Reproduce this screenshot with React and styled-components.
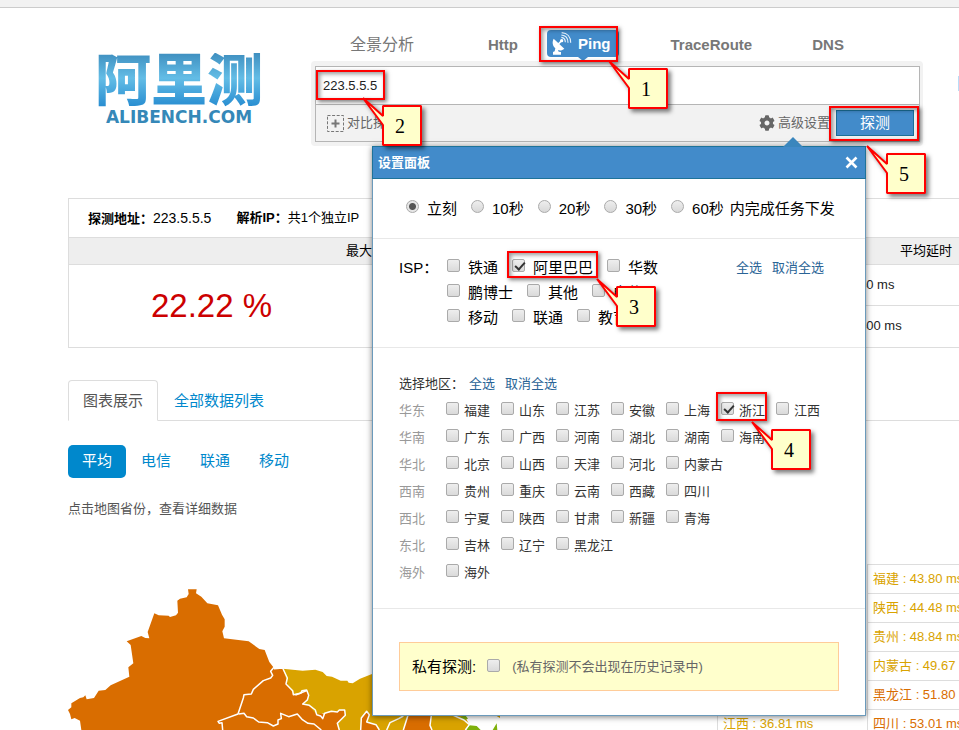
import React from 'react'
import styled, { createGlobalStyle } from 'styled-components'
import { FaCog } from 'react-icons/fa'

const delays = [
    {name: '福建', value: '43.80', color: '#d9a300'},
    {name: '陕西', value: '44.48', color: '#d9a300'},
    {name: '贵州', value: '48.84', color: '#d9a300'},
    {name: '内蒙古', value: '49.67', color: '#d9a300'},
    {name: '黑龙江', value: '51.80', color: '#d96d00'},
    {name: '四川', value: '53.01', color: '#d96d00'},
]

const waits = ['立刻', '10秒', '20秒', '30秒']

const ispRows = [
    ['铁通', '阿里巴巴', '华数'],
    ['鹏博士', '其他', '电信'],
    ['移动', '联通', '教育网'],
]

const regions = [
    {area: '华东', items: ['福建', '山东', '江苏', '安徽', '上海', '浙江', '江西']},
    {area: '华南', items: ['广东', '广西', '河南', '湖北', '湖南', '海南']},
    {area: '华北', items: ['北京', '山西', '天津', '河北', '内蒙古']},
    {area: '西南', items: ['贵州', '重庆', '云南', '西藏', '四川']},
    {area: '西北', items: ['宁夏', '陕西', '甘肃', '新疆', '青海']},
    {area: '东北', items: ['吉林', '辽宁', '黑龙江']},
    {area: '海外', items: ['海外']},
]

const steps = [
    {no: 1, mark: [539, 26, 79, 36], note: [628, 68]},
    {no: 2, mark: [316, 70, 69, 30], note: [382, 105]},
    {no: 3, mark: [507, 251, 91, 27], note: [616, 286]},
    {no: 4, mark: [716, 392, 51, 29], note: [771, 429]},
    {no: 5, mark: [829, 106, 90, 35], note: [886, 153]},
]

function DishIcon() {
    return (
        <svg width="20" height="24" viewBox="0 0 60 72" fill="none" aria-hidden="true">
            <path d="M5 20 L37 50 C30 56 24 56 18 54 L20 59 L27 60 L27 68 L3 68 L3 60 L8 58 L10 49 C1 41 0 30 5 20Z" fill="#fff" />
            <path d="M19 36 L28 27" stroke="#fff" strokeWidth="5" />
            <circle cx="29" cy="26" r="5" fill="#fff" />
            <path d="M28 16 C36 17 40 22 40 31 M28 9 C40 10 48 18 48 32 M29 2 C46 3 56 15 56 32" stroke="#e4f0fa" strokeWidth="3.5" />
        </svg>
    )
}

function CompareIcon() {
    return (
        <svg width="17" height="17" viewBox="0 0 17 17" fill="none" stroke="#777" aria-hidden="true">
            <rect x=".5" y=".5" width="16" height="16" strokeDasharray="3 1.6" />
            <path d="M4.5 8.5h8M8.5 4.5v8" strokeWidth="2" />
        </svg>
    )
}

function CloseIcon() {
    return (
        <svg width="13" height="13" viewBox="0 0 13 13" stroke="#fff" strokeWidth="2.6" aria-hidden="true">
            <path d="M1.5 1.5l10 10M11.5 1.5l-10 10" />
        </svg>
    )
}

function ChinaMap() {
    return (
        <MapSvg width="432" height="142" viewBox="24 54 1296 426" role="img" aria-label="地图">
            <path fill="#d96d00" d="M64 480 L60 452 44 444 34 448 30 432 24 420 34 412 34 400 60 384 70 382 76 376 80 388 102 384 116 362 136 360 152 346 208 320 205 292 220 280 212 225 200 214 244 198 256 204 268 205 263 186 283 130 296 136 326 137 330 141 348 136 354 128 352 92 360 86 380 82 386 72 384 58 410 58 408 70 424 80 442 100 474 106 486 134 494 148 494 170 487 184 492 205 566 214 598 237 614 240 628 276 642 294 668 294 700 372 860 480Z" />
            <path fill="#d9a300" d="M668 296 L728 302 766 299 788 306 800 318 816 320 842 332 862 332 866 338 878 340 900 326 936 312 1080 400 1210 430 1228 464 1216 480 836 480 832 462 800 430 770 432 728 402 745 380 740 360 700 374 684 344Z" />
            <path fill="#d96d00" d="M728 402 L748 408 770 436 790 444 796 430 852 420 856 434 832 462 836 480 700 480 700 380 745 362 744 384Z" />
            <path fill="#d96d00" d="M902 480 L904 444 920 424 928 434 920 456 948 464 958 480Z" />
            <path fill="#d96d00" d="M1030 480 L1040 450 1046 436 1114 436 1110 466 1116 480Z" />
            <path fill="#7eb00b" d="M1200 442 L1216 436 1224 446 1212 450Z M1218 480 L1228 466 1250 468 1262 480Z M1298 480 L1310 460 1312 480Z" />
            <path fill="#d9a300" d="M1310 438 h20 l-10 6z" />
            <g fill="none" stroke="#fff" strokeWidth="4.5" strokeLinejoin="round">
                <path d="M642 292 L632 304 638 316 632 324 610 332 580 358 574 372 552 374 550 384 534 432 474 454 478 460 486 458 488 480" />
                <path d="M642 296 L668 294 682 324 678 342 698 362 700 374 722 370 726 362 740 360 746 376 742 390 728 402 748 406 766 420 770 434 782 438 788 446 794 430 814 424 832 426 838 420 854 420 856 436 832 460 838 480" />
                <path d="M536 432 L552 430 560 440 580 444 596 456 622 458 640 468 654 462 654 450 664 446 662 430 686 440 712 432 726 448 744 460 762 462 784 480" />
                <path d="M902 480 L904 444 920 424 928 434 920 456 948 464 958 480 M980 480 L990 458 1016 446 1030 438 M1044 436 L1030 480 M1114 436 L1110 466 1116 480 M1180 436 L1212 450 1228 464 1216 480" />
            </g>
        </MapSvg>
    )
}

function Check({label, size, gap, lift}) {
    return (
        <Choice $size={size} $gap={gap}>
            <CheckBox type="checkbox" $lift={lift} defaultChecked={label === '阿里巴巴' || label === '浙江'} />
            {label}
        </Choice>
    )
}

function SettingsPanel() {
    return (
        <Panel>
            <PanelHead>
                <PanelTitle>设置面板</PanelTitle>
                <CloseButton type="button" aria-label="关闭"><CloseIcon /></CloseButton>
            </PanelHead>
            <WaitSection>
                {waits.map((wait, i) => (
                    <Choice key={wait} $size={15} $gap={8}>
                        <Radio type="radio" name="wait" defaultChecked={i === 0} />
                        {wait}
                    </Choice>
                ))}
                <WaitEnd>
                    <Choice $size={15} $gap={8}>
                        <Radio type="radio" name="wait" />
                        60秒
                    </Choice>
                    <span>内完成任务下发</span>
                </WaitEnd>
            </WaitSection>
            <IspSection>
                <IspTitle>ISP：</IspTitle>
                <IspList>
                    {ispRows.map((row) => (
                        <IspRow key={row[0]}>
                            {row.map((isp) => <Check key={isp} label={isp} size={15} gap={8} lift={4} />)}
                        </IspRow>
                    ))}
                </IspList>
                <Links>
                    <PickLink href="#all">全选</PickLink>
                    <PickLink href="#none">取消全选</PickLink>
                </Links>
            </IspSection>
            <RegionSection>
                <RegionHead>
                    <span>选择地区：</span>
                    <Links>
                        <PickLink href="#all">全选</PickLink>
                        <PickLink href="#none">取消全选</PickLink>
                    </Links>
                </RegionHead>
                {regions.map(({area, items}) => (
                    <RegionRow key={area}>
                        <Area>{area}</Area>
                        {items.map((item) => <Check key={item} label={item} size={13} gap={5} lift={5} />)}
                    </RegionRow>
                ))}
            </RegionSection>
            <PrivateBox>
                <PrivateLabel htmlFor="private">私有探测:</PrivateLabel>
                <CheckBox id="private" type="checkbox" $lift={2} />
                <PrivateHint>(私有探测不会出现在历史记录中)</PrivateHint>
            </PrivateBox>
        </Panel>
    )
}

// numbered step: red frame round a control, and the note that points at it
function Step({no, mark, note}) {
    return (
        <>
            <Mark $x={mark[0]} $y={mark[1]} $w={mark[2]} $h={mark[3]} />
            <Note $x={note[0]} $y={note[1]}>
                <NoteShape width="68" height="58" viewBox="-22 -11 68 58" aria-hidden="true">
                    <path d="M-19 -7 L1 11 L1 1 L39 1 L39 40 L1 40 L1 20 Z" fill="#ffffcb" stroke="#f00" strokeWidth="2" strokeLinejoin="bevel" />
                </NoteShape>
                <NoteText>{no}</NoteText>
            </Note>
        </>
    )
}

function App() {
    return (
        <Page>
            <GlobalStyle />
            <TopStrip />
            <Header>
                <Logo>
                    <LogoName>阿里测</LogoName>
                    <LogoSite>ALIBENCH.COM</LogoSite>
                </Logo>
                <Search>
                    <Tabs>
                        <WideTab href="#all">全景分析</WideTab>
                        <Tab href="#http">Http</Tab>
                        <ActiveTab href="#ping"><DishIcon />Ping</ActiveTab>
                        <Tab href="#trace">TraceRoute</Tab>
                        <Tab href="#dns">DNS</Tab>
                    </Tabs>
                    <SearchFrame>
                        <SearchBox>
                            <SearchInput aria-label="探测地址" defaultValue="223.5.5.5" />
                            <Toolbar>
                                <ToolButton type="button"><CompareIcon />对比探测</ToolButton>
                                <ToolGroup>
                                    <ToolButton type="button"><FaCog size={16} />高级设置</ToolButton>
                                    <RunButton type="button">探测</RunButton>
                                </ToolGroup>
                            </Toolbar>
                        </SearchBox>
                    </SearchFrame>
                    <SettingsPanel />
                </Search>
                <SideBox />
            </Header>
            <Main>
                <Summary>
                    <Info>
                        <span><b>探测地址：</b><Address>223.5.5.5</Address></span>
                        <span><b>解析IP：</b>共1个独立IP</span>
                    </Info>
                    <Table>
                        <colgroup>
                            <LossCol />
                            <col />
                            <DelayCol />
                        </colgroup>
                        <thead>
                            <tr>
                                <Th />
                                <Th>最大延时</Th>
                                <Th $indent={41}>平均延时</Th>
                            </tr>
                        </thead>
                        <tbody>
                            <tr>
                                <Loss rowSpan={2}>22.22 %</Loss>
                                <Td />
                                <Td>40 ms</Td>
                            </tr>
                            <tr>
                                <Td />
                                <Td>400 ms</Td>
                            </tr>
                        </tbody>
                    </Table>
                </Summary>
                <ViewTabs>
                    <ViewTab href="#chart" $active>图表展示</ViewTab>
                    <ViewTab href="#list">全部数据列表</ViewTab>
                </ViewTabs>
                <Pills>
                    <Pill type="button" $active>平均</Pill>
                    <Pill type="button">电信</Pill>
                    <Pill type="button">联通</Pill>
                    <Pill type="button">移动</Pill>
                </Pills>
                <Hint>点击地图省份，查看详细数据</Hint>
                <Board>
                    <MapArea><ChinaMap /></MapArea>
                    <Ranks>
                        <RankList $last>
                            <Rank $color="#d9a300">江西 : 36.81 ms</Rank>
                        </RankList>
                        <RankList>
                            {delays.map(({name, value, color}) => (
                                <Rank key={name} $color={color}>{name} : {value} ms</Rank>
                            ))}
                        </RankList>
                    </Ranks>
                </Board>
            </Main>
            {steps.map((step) => <Step key={step.no} {...step} />)}
        </Page>
    )
}

const GlobalStyle = createGlobalStyle`
    * {
        box-sizing: border-box;
    }
    body {
        margin: 0;
        background: #fff;
        color: #000;
        font: 13px/20px "Liberation Sans", "Noto Sans CJK SC", sans-serif;
    }
    button, input {
        margin: 0;
        font: inherit;
    }
    a {
        text-decoration: none;
    }
`

const Page = styled.div`
    position: relative;
    height: 100vh;
    overflow: hidden;
`

const TopStrip = styled.div`
    height: 8px;
    background: #f2f2f2;
    border-bottom: 1px solid #ccc;
`

const Header = styled.header`
    display: flex;
    padding: 22px 0 0 95px;
`

const Logo = styled.div`
    flex: 0 0 216px;
    padding-top: 23px;
`

const LogoName = styled.div`
    width: 168px;
    font-size: 56px;
    line-height: 56px;
    font-weight: 900;
    color: transparent;
    background: linear-gradient(#3f8fc0, #63bde6 45%, #2389cf);
    background-clip: text;
    -webkit-background-clip: text;
`

const LogoSite = styled.div`
    width: 168px;
    text-align: center;
    font: bold 17px/16px "DejaVu Sans", sans-serif;
    color: #3588b8;
`

const Search = styled.div`
    position: relative;
    flex: 0 0 612px;
`

const Tabs = styled.nav`
    display: flex;
    gap: 21px;
    padding-left: 8px;
    margin-bottom: 4px;
`

const Tab = styled.a`
    padding: 0 8px 0 31px;
    color: #777;
    font-size: 15px;
    font-weight: bold;
    line-height: 29px;
    height: 27px;
`

const WideTab = styled(Tab)`
    margin-right: 14px;
    font-size: 16px;
    font-weight: normal;
`

const ActiveTab = styled(Tab)`
    position: relative;
    display: flex;
    align-items: center;
    gap: 6px;
    padding-left: 5px;
    color: #fff;
    background: #428bca;
    border-radius: 4px;
    &::after {
        content: "";
        position: absolute;
        top: 100%;
        left: 50%;
        margin-left: -5px;
        border: 5px solid transparent;
        border-top: 4px solid #428bca;
        border-bottom: 0;
    }
`

const SearchFrame = styled.div`
    padding: 5px 3px 4px 4px;
    background: #f2f2f2;
    border-radius: 4px;
`

const SearchBox = styled.div`
    border: 1px solid #b5b5b5;
`

const SearchInput = styled.input`
    display: block;
    width: 100%;
    height: 38px;
    padding: 0 7px;
    border: 0;
    border-bottom: 1px solid #b5b5b5;
    background: #fff;
    color: #222;
    outline: 0;
`

const Toolbar = styled.div`
    display: flex;
    align-items: center;
    justify-content: space-between;
    height: 36px;
    padding: 0 5px 0 11px;
`

const ToolGroup = styled.div`
    display: flex;
    align-items: center;
    gap: 6px;
`

const ToolButton = styled.button`
    display: flex;
    align-items: center;
    gap: 3px;
    padding: 0;
    border: 0;
    background: none;
    color: #666;
`

const RunButton = styled.button`
    width: 78px;
    height: 26px;
    padding: 0;
    border: 1px solid #1a7098;
    background: #428bca;
    color: #fff;
    font-size: 15px;
`

const SideBox = styled.div`
    flex: 1;
    height: 15px;
    margin: 46px 0 0 35px;
    background: #b9dcf8;
`

const Panel = styled.section`
    position: absolute;
    z-index: 1;
    top: 116px;
    right: 57px;
    width: 494px;
    padding-bottom: 24px;
    background: #fff;
    border: 1px solid #6b9abb;
    box-shadow: 0 1px 6px rgba(0, 0, 0, .5);
`

const PanelHead = styled.div`
    position: relative;
    display: flex;
    align-items: center;
    justify-content: space-between;
    height: 33px;
    margin: -1px -1px 0;
    padding: 0 7px 0 5px;
    color: #fff;
    background: #428bca;
    border: 1px solid #1e7399;
    &::before {
        content: "";
        position: absolute;
        right: 62px;
        bottom: 100%;
        border: 10px solid transparent;
        border-bottom-color: #3a86bd;
        border-top: 0;
    }
`

const PanelTitle = styled.h2`
    margin: 0;
    font-size: 13px;
`

const CloseButton = styled.button`
    display: flex;
    padding: 0;
    border: 0;
    background: none;
`

const WaitSection = styled.div`
    display: flex;
    align-items: center;
    gap: 14px;
    height: 60px;
    padding-left: 33px;
    border-bottom: 1px solid #e8e8e8;
`

const WaitEnd = styled.div`
    display: flex;
    gap: 6px;
    font-size: 15px;
`

const Choice = styled.label`
    display: inline-flex;
    align-items: center;
    gap: ${({$gap}) => $gap}px;
    font-size: ${({$size}) => $size}px;
    white-space: nowrap;
`

const Radio = styled.input`
    appearance: none;
    width: 13px;
    height: 13px;
    margin-bottom: 4px;
    border: 1px solid #aaa;
    border-radius: 50%;
    background: linear-gradient(#eee, #d8d8d8);
    &:checked {
        background: radial-gradient(circle, #555 0 3px, #e6e6e6 4px);
    }
`

const CheckBox = styled.input`
    appearance: none;
    position: relative;
    flex: none;
    width: 13px;
    height: 13px;
    margin-bottom: ${({$lift}) => $lift}px;
    border: 1px solid #aaa;
    border-radius: 2px;
    background: linear-gradient(#eee, #dadada);
    &:checked::after {
        content: "";
        position: absolute;
        left: 4px;
        top: 0;
        width: 4px;
        height: 8px;
        border: solid #333;
        border-width: 0 2px 2px 0;
        transform: rotate(42deg);
    }
`

const IspSection = styled.div`
    display: flex;
    padding: 16px 41px 17px 26px;
    line-height: 25px;
    border-bottom: 1px solid #e8e8e8;
`

const IspTitle = styled.div`
    width: 48px;
    font-size: 15px;
`

const IspList = styled.div`
    flex: 1;
`

const IspRow = styled.div`
    display: flex;
    gap: 14px;
    height: 25px;
`

const Links = styled.div`
    display: flex;
    gap: 10px;
`

const PickLink = styled.a`
    color: #2a6496;
`

const RegionSection = styled.div`
    padding: 22px 26px;
    color: #333;
    line-height: 27px;
    border-bottom: 1px solid #e8e8e8;
`

const RegionHead = styled.div`
    display: flex;
    gap: 5px;
`

const RegionRow = styled.div`
    display: flex;
    gap: 11px;
    height: 27px;
`

const Area = styled.span`
    width: 36px;
    color: #999;
`

const PrivateBox = styled.div`
    display: flex;
    align-items: center;
    height: 49px;
    margin: 33px 26px 0;
    padding: 0 12px;
    background: #ffc;
    border: 1px solid #fc9;
`

const PrivateLabel = styled.label`
    margin-right: 11px;
    font-size: 15px;
`

const PrivateHint = styled.span`
    margin-left: 12px;
    color: #666;
`

const Main = styled.main`
    margin: 52px 0 0 68px;
`

const Summary = styled.section`
    border: 1px solid #ddd;
    border-right: 0;
`

const Info = styled.div`
    display: flex;
    gap: 25px;
    height: 38px;
    padding-left: 19px;
    line-height: 38px;
`

const Address = styled.span`
    font-size: 14px;
`

const Table = styled.table`
    width: 100%;
    table-layout: fixed;
    border-collapse: collapse;
`

const LossCol = styled.col`
    width: 277px;
`

const DelayCol = styled.col`
    width: 100px;
`

const Th = styled.th`
    height: 27px;
    padding: 0 0 0 ${({$indent}) => $indent || 0}px;
    font-weight: normal;
    text-align: left;
    white-space: nowrap;
    background: #eee;
    border-top: 1px solid #ddd;
    border-bottom: 1px solid #ddd;
`

const Td = styled.td`
    height: 41px;
    padding: 0;
    color: #222;
    & + & {
        border-top: 1px solid #ddd;
    }
`

const Loss = styled.td`
    padding: 0 0 0 8px;
    text-align: center;
    font-size: 33px;
    color: #c00;
`

const ViewTabs = styled.nav`
    display: flex;
    gap: 1px;
    margin-top: 32px;
    border-bottom: 1px solid #ddd;
`

const ViewTab = styled.a`
    height: 41px;
    margin-bottom: -1px;
    padding: 0 14px;
    font-size: 15px;
    line-height: 39px;
    color: ${({$active}) => $active ? '#555' : '#08c'};
    border: 1px solid ${({$active}) => $active ? '#ddd' : 'transparent'};
    border-bottom-color: ${({$active}) => $active ? '#fff' : 'transparent'};
    border-radius: 4px 4px 0 0;
`

const Pills = styled.div`
    display: flex;
    gap: 1px;
    margin-top: 24px;
`

const Pill = styled.button`
    height: 33px;
    padding: 0 14px;
    border: 0;
    border-radius: 5px;
    font-size: 15px;
    color: ${({$active}) => $active ? '#fff' : '#08c'};
    background: ${({$active}) => $active ? '#08c' : 'none'};
`

const Hint = styled.p`
    margin: 21px 0 0;
    color: #555;
`

const Board = styled.div`
    display: flex;
    margin-top: 45px;
`

const MapArea = styled.div`
    flex: 1;
    padding-top: 24px;
`

const MapSvg = styled.svg`
    display: block;
`

const Ranks = styled.div`
    display: flex;
    flex: 0 0 242px;
    overflow: hidden;
`

const RankList = styled.ul`
    flex: 0 0 150px;
    align-self: ${({$last}) => $last ? 'flex-end' : 'auto'};
    margin: 0;
    padding: 0;
    list-style: none;
    border-left: 1px solid #ddd;
`

const Rank = styled.li`
    height: 29px;
    padding-left: 5px;
    line-height: 28px;
    white-space: nowrap;
    color: ${({$color}) => $color};
    border-top: 1px solid #ddd;
`

const Mark = styled.div`
    position: absolute;
    z-index: 2;
    left: ${({$x}) => $x}px;
    top: ${({$y}) => $y}px;
    width: ${({$w}) => $w}px;
    height: ${({$h}) => $h}px;
    border: 2px solid #f00;
    box-shadow: 2px 2px 4px rgba(0, 0, 0, .5), inset 2px 2px 4px rgba(0, 0, 0, .4);
    pointer-events: none;
`

const Note = styled.div`
    position: absolute;
    z-index: 3;
    left: ${({$x}) => $x}px;
    top: ${({$y}) => $y}px;
    width: 40px;
    height: 41px;
    pointer-events: none;
`

const NoteShape = styled.svg`
    position: absolute;
    left: -22px;
    top: -11px;
    overflow: visible;
    filter: drop-shadow(3px 3px 2px rgba(0, 0, 0, .5));
`

const NoteText = styled.span`
    position: relative;
    display: block;
    padding-right: 4px;
    text-align: center;
    font: 20px/42px "Liberation Serif", serif;
`

export default App
